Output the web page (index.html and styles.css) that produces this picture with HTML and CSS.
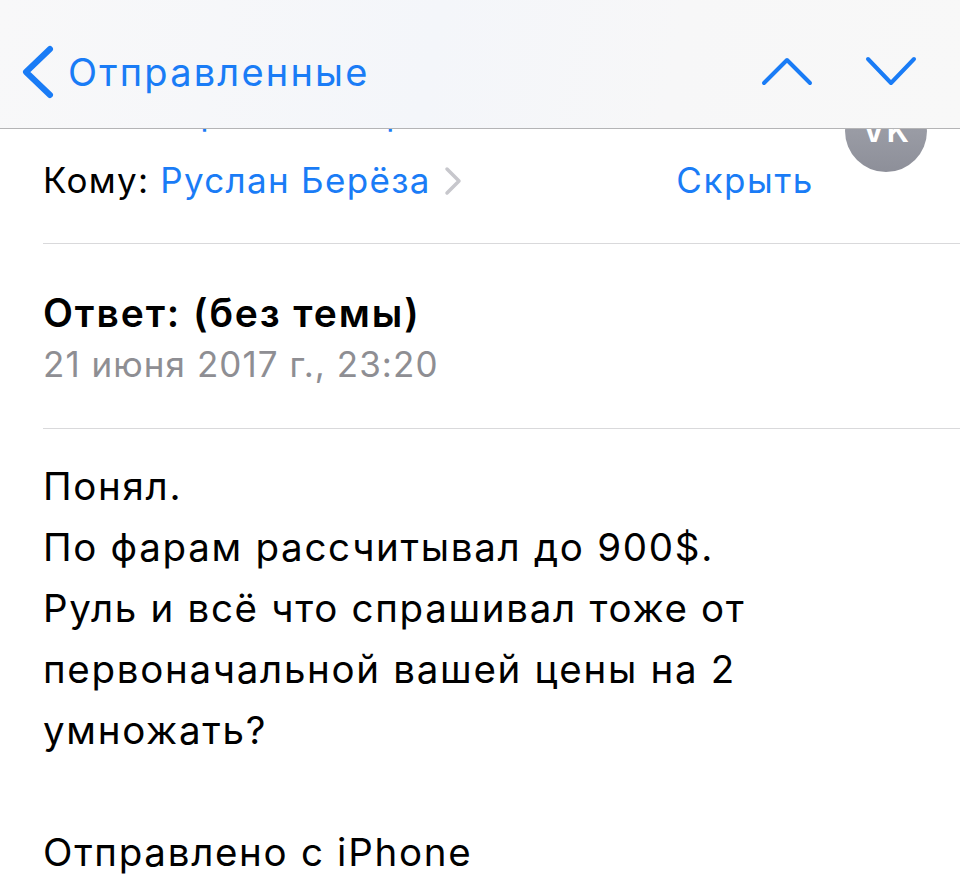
FILE: index.html
```html
<!DOCTYPE html>
<html lang="ru">
<head>
<meta charset="utf-8">
<title>Отправленные</title>
<link rel="stylesheet" href="styles.css">
</head>
<body>
<header class="navbar">
  <a class="back">
    <svg class="back-icon" width="36" height="58" viewBox="0 0 36 58"><polyline points="30,6 6,29 30,52" fill="none" stroke="#1a7cf6" stroke-width="6" stroke-linecap="round" stroke-linejoin="round"/></svg>
    <span class="back-title">Отправленные</span>
  </a>
  <div class="nav-arrows">
    <svg class="arrow" width="56" height="33" viewBox="0 0 56 33"><polyline points="5,28 28,5 51,28" fill="none" stroke="#1a7cf6" stroke-width="4" stroke-linecap="round" stroke-linejoin="round"/></svg>
    <svg class="arrow" width="56" height="33" viewBox="0 0 56 33"><polyline points="5,4 28,28 51,4" fill="none" stroke="#1a7cf6" stroke-width="4" stroke-linecap="round" stroke-linejoin="round"/></svg>
  </div>
</header>

<main class="mail">
  <section class="mail-head">
    <div class="head-rows">
      <div class="row from-row"><span class="label">От:</span><span class="link">Валерий Тихонравов</span></div>
      <div class="row to-row">
        <div class="to-left">
          <span class="label">Кому:</span>
          <span class="link">Руслан Берёза</span>
          <svg class="disclosure" width="22" height="30" viewBox="0 0 22 30"><polyline points="5,3 17,15 5,27" fill="none" stroke="#c7c7cc" stroke-width="3.5" stroke-linecap="round" stroke-linejoin="round"/></svg>
        </div>
        <span class="link hide">Скрыть</span>
      </div>
    </div>
    <div class="avatar">VK</div>
  </section>

  <section class="mail-subject">
    <div class="subject">Ответ: (без темы)</div>
    <div class="date">21 июня 2017 г., 23:20</div>
  </section>

  <section class="mail-body">
    <p class="text">Понял.<br>По фарам рассчитывал до 900$.<br>Руль и всё что спрашивал тоже от<br>первоначальной вашей цены на 2<br>умножать?</p>
    <p class="text signature">Отправлено с iPhone</p>
  </section>
</main>
</body>
</html>
```

FILE: styles.css
```css
* { box-sizing: border-box; }

html, body {
  margin: 0;
  padding: 0;
  background: #ffffff;
}

body {
  font-family: "Inter", "Noto Sans", sans-serif;
  color: #000;
  width: 960px;
  height: 876px;
  overflow: hidden;
}

.navbar {
  position: fixed;
  top: 0;
  left: 0;
  width: 960px;
  height: 129px;
  padding: 15px 41px 0 20px;
  display: flex;
  align-items: center;
  background: linear-gradient(100deg, #f8f8f9 0%, #f4f6fa 45%, #f7f7f8 70%, #f8f8f8 100%);
  border-bottom: 1px solid #b4b4b6;
  z-index: 2;
}

.back {
  display: flex;
  align-items: center;
  gap: 12px;
  color: #1a7cf6;
}

.back-icon { display: block; }

.back-title {
  font-size: 38px;
  line-height: 40px;
  letter-spacing: 2.2px;
}

.nav-arrows {
  margin-left: auto;
  display: flex;
  align-items: center;
  gap: 48px;
}

.arrow { display: block; }

.mail {
  margin-left: 43px;
}

.mail-head {
  display: flex;
  align-items: flex-start;
  border-bottom: 1px solid #d9d9db;
}

.head-rows {
  flex: 1;
  padding: 82px 0 33px;
}

.row {
  height: 60px;
  font-size: 35px;
  line-height: 60px;
  letter-spacing: 1.3px;
}

.to-row {
  margin-top: 8px;
  display: flex;
  align-items: center;
  justify-content: space-between;
}

.to-left {
  display: flex;
  align-items: center;
}

.label { color: #000; margin-right: 12px; }
.to-row .label { margin-right: 11px; }
.link { color: #1a7cf6; }

.disclosure {
  display: block;
  margin-left: 11px;
  margin-top: 2px;
}

.hide { letter-spacing: 1.6px; }

.avatar {
  width: 82px;
  height: 82px;
  margin: 90px 33px 0 31px;
  border-radius: 50%;
  background: linear-gradient(180deg, #a6a8b0 0%, #8d8f99 100%);
  color: #fff;
  font-weight: 600;
  font-size: 32px;
  line-height: 82px;
  text-align: center;
  letter-spacing: 1px;
}

.mail-subject {
  padding: 42px 0 39px;
  border-bottom: 1px solid #d9d9db;
}

.subject {
  font-size: 39px;
  font-weight: 600;
  line-height: 53px;
  letter-spacing: 1.9px;
}

.date {
  font-size: 35px;
  line-height: 50px;
  color: #8e8e93;
  letter-spacing: 1.05px;
}

.mail-body {
  padding-top: 27px;
}

.text {
  margin: 0;
  font-size: 38.5px;
  line-height: 61px;
  letter-spacing: 1.7px;
  white-space: nowrap;
}

.signature {
  margin-top: 61px;
}
```
